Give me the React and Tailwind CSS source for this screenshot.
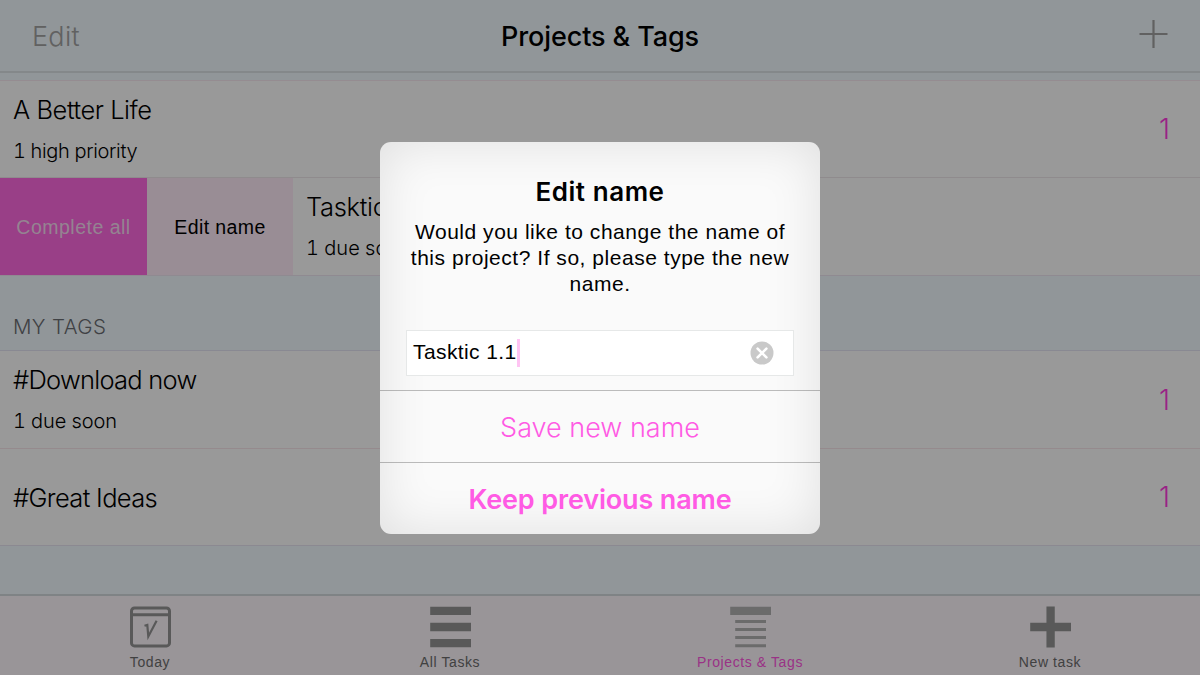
import React from "react";

function Row({ title, detail, count, className = "", titleClass = "", detailClass = "", children }) {
  return (
    <div className={`flex border-t ${className}`}>
      {children}
      <div className="flex flex-1 flex-col justify-center pt-[2px] pl-[13px]">
        <div className={`font-light text-[25.5px] leading-[30px] ${titleClass}`}>{title}</div>
        {detail && (
          <div className={`mt-[11px] font-light tabular-nums text-[20px] leading-[30px] ${detailClass}`}>{detail}</div>
        )}
      </div>
      {count && <div className="flex items-center pr-[30px] font-light text-[28px] text-[#ff3ae0]">{count}</div>}
    </div>
  );
}

function Tab({ label, active, children }) {
  return (
    <div className="flex flex-1 flex-col items-center pt-[10px]">
      <svg className="ml-[1px]" width="42" height="42" viewBox="0 0 42 42">{children}</svg>
      <div
        className={`mt-[4px] font-['Liberation_Sans',sans-serif] text-[14px] leading-[20px] tracking-[0.6px] ${
          active ? "text-[#ff55e0]" : "text-[#6d6d6d]"
        }`}
      >
        {label}
      </div>
    </div>
  );
}

export default function App() {
  return (
    <div className="relative h-[675px] w-[1200px] overflow-hidden bg-[#f2faff] font-['Inter',sans-serif] text-black">
      <div className="flex h-full flex-col">
        <header className="grid h-[73px] grid-cols-3 items-center border-b-2 border-[#dde3e7]">
          <div className="pt-[4px] pl-[32px] text-[27px] font-light tracking-[0.3px] text-[#a2a2a2]">Edit</div>
          <div className="pt-[4px] text-center text-[27px] font-medium tracking-[-0.1px]">Projects &amp; Tags</div>
          <svg className="mr-[32px] mb-[3px] justify-self-end" width="29" height="28" viewBox="0 0 29 28">
            <path d="M0.5 14H28.5M14.5 0V28" stroke="#a2a2a2" strokeWidth="2.2" fill="none" />
          </svg>
        </header>

        <div className="mt-[7px] border-b border-[#eee6f2]">
          <Row
            title="A Better Life"
            detail="1 high priority"
            count="1"
            className="h-[97px] border-[#f8eaf2] bg-white"
            titleClass="tracking-[-0.45px]"
            detailClass="tracking-[-0.35px]"
          />
          <Row
            title="Tasktic 1.0"
            detail="1 due soon"
            className="h-[98px] border-[#eee8ec] bg-white"
            titleClass="tracking-[-0.3px]"
          >
            <div className="flex w-[147px] items-center justify-center bg-[#ff69e1] pt-[2px] font-['Liberation_Sans',sans-serif] text-[19.5px] tracking-[0.5px] text-[#f7dcf2]">
              Complete all
            </div>
            <div className="flex w-[146px] items-center justify-center bg-[#ffebf9] pt-[2px] font-['Liberation_Sans',sans-serif] text-[19.5px] tracking-[0.4px]">
              Edit name
            </div>
          </Row>
        </div>

        <div className="flex h-[74px] items-end pb-[7px] pl-[13px] text-[20.5px] font-light tracking-[0.4px] text-[#6a6d72]">
          MY TAGS
        </div>

        <div className="border-b border-[#e8e4f2]">
          <Row
            title="#Download now"
            detail="1 due soon"
            count="1"
            className="h-[98px] border-[#e4e4f4] bg-white"
            titleClass="tracking-[-0.75px]"
            detailClass="tracking-[-0.1px]"
          />
          <Row
            title="#Great Ideas"
            count="1"
            className="h-[97px] border-[#f8e6ec] bg-white"
            titleClass="tracking-[-0.65px]"
          />
        </div>

        <nav className="mt-auto flex h-[81px] border-t-2 border-[#d4dade] bg-[#fff8fe]">
          <Tab label="Today">
            <rect x="1.5" y="1.9" width="38" height="38" rx="3" fill="none" stroke="#949494" strokeWidth="3" />
            <path d="M2 8.7H40" stroke="#949494" strokeWidth="3" />
            <path d="M14.5 19.8L17.3 19L18.3 30.5L26.6 14.8" fill="none" stroke="#949494" strokeWidth="2.2" />
          </Tab>
          <Tab label="All Tasks">
            <path d="M0.2 4.8H41M0.2 21H41M0.2 37.2H41" stroke="#949494" strokeWidth="8.3" />
          </Tab>
          <Tab label="Projects & Tags" active>
            <path d="M0.2 4.8H41" stroke="#b2b2b2" strokeWidth="8.3" />
            <path d="M5.2 15.4H36M5.2 23.5H36M5.2 31.6H36M5.2 39.7H36" stroke="#b2b2b2" strokeWidth="3" />
          </Tab>
          <Tab label="New task">
            <path d="M0.2 21H41M20.6 0.6V41.4" stroke="#949494" strokeWidth="8.3" />
          </Tab>
        </nav>
      </div>

      <div className="absolute inset-0 flex items-center justify-center bg-black/40">
        <div className="flex h-[392px] w-[440px] flex-col overflow-hidden rounded-[11px] bg-[#fafafa] text-center shadow-[inset_0_0_50px_rgba(0,0,0,0.11)]">
          <div className="flex h-[248px] flex-col items-center px-[26px] pt-[34px]">
            <h1 className="text-[26px] leading-[32px] font-semibold tracking-[0.55px]">Edit name</h1>
            <p className="mt-[11px] font-['Liberation_Sans',sans-serif] text-[21px] leading-[26px] tracking-[0.53px] whitespace-nowrap">
              Would you like to change the name of
              <br />
              this project? If so, please type the new
              <br />
              name.
            </p>
            <div className="mt-[33px] flex h-[46px] w-[388px] items-center border border-[#e6e8e8] bg-white pr-[19px] pl-[6px]">
              <span className="pb-[1px] font-['Liberation_Sans',sans-serif] text-[21px] tracking-[0.4px]">Tasktic 1.1</span>
              <span className="h-[28px] w-[3px] bg-[#ffc4f3]" />
              <svg className="ml-auto" width="24" height="24" viewBox="0 0 24 24">
                <circle cx="12" cy="12" r="11.5" fill="#c9c9c9" />
                <path d="M7.6 7.6L16.4 16.4M16.4 7.6L7.6 16.4" stroke="#fff" strokeWidth="2.6" strokeLinecap="round" />
              </svg>
            </div>
          </div>
          <div className="flex h-[72px] items-center justify-center border-t border-black/25 pt-[5px] text-[27px] font-light text-[#ff5ae4]">
            Save new name
          </div>
          <div className="flex h-[72px] items-center justify-center border-t border-black/25 pt-[5px] text-[27px] font-semibold tracking-[-0.15px] text-[#ff5ae4]">
            Keep previous name
          </div>
        </div>
      </div>
    </div>
  );
}
